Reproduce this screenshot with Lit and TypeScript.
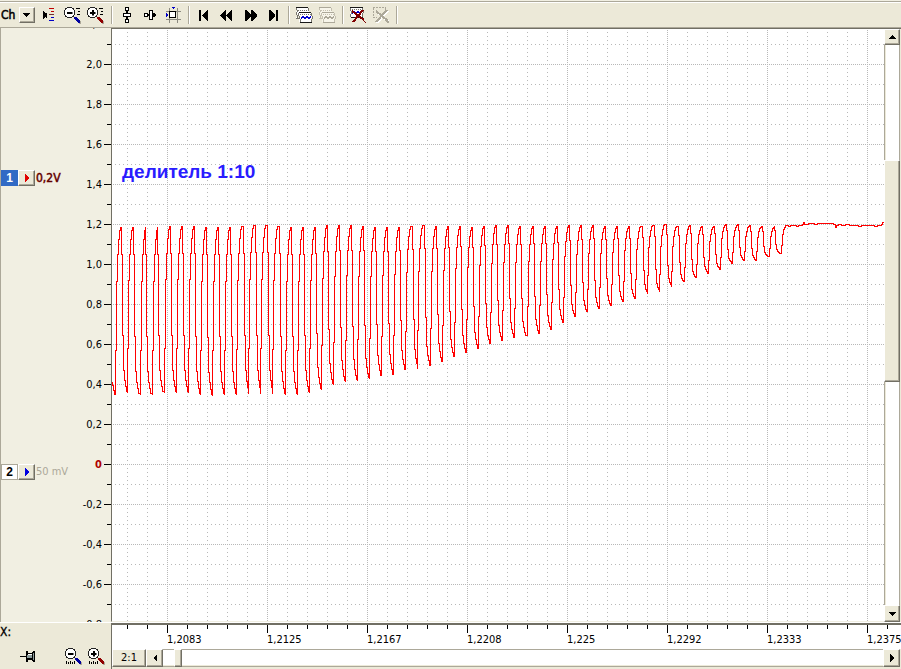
import { LitElement, html, css, svg } from "lit";
import { customElement, property } from "lit/decorators.js";

/* Crest and trough samples of the captured burst: [x, y] in screen units. */
const TROUGHS: number[][] = [
  [115, 395], [127, 393], [140, 395], [152, 395], [164, 393], [176, 393], [188, 393], [200, 395],
  [212, 396], [224, 395], [236, 395], [248, 394], [260, 394], [272, 394], [285, 395], [297, 395],
  [309, 393], [321, 390], [333, 385], [345, 382], [357, 381], [369, 379], [381, 376], [393, 375],
  [405, 370], [417, 369], [430, 366], [442, 362], [454, 357], [466, 353], [478, 349], [490, 344],
  [502, 341], [514, 338], [527, 336], [539, 334], [551, 330], [563, 323], [575, 317], [587, 312],
  [599, 309], [611, 306], [623, 302], [635, 299], [647, 294], [659, 292], [671, 287], [684, 282],
  [696, 278], [708, 273], [720, 269], [732, 263], [744, 260], [756, 260], [769, 256], [781, 253],
];
const CRESTS: number[][] = [
  [121, 227], [133, 227], [145, 227], [157, 227], [170, 226], [182, 226], [194, 226], [206, 227],
  [218, 227], [230, 227], [243, 226], [255, 225], [267, 225], [279, 226], [291, 227], [303, 227],
  [315, 227], [327, 225], [339, 225], [351, 225], [363, 226], [375, 227], [387, 227], [399, 227],
  [412, 226], [424, 225], [436, 226], [448, 226], [460, 226], [472, 227], [484, 226], [496, 225],
  [508, 225], [520, 226], [533, 226], [545, 226], [557, 226], [569, 225], [581, 225], [593, 225],
  [605, 226], [617, 226], [629, 226], [642, 226], [654, 225], [666, 224], [678, 226], [690, 225],
  [702, 226], [714, 226], [726, 224], [738, 224], [750, 225], [762, 226], [774, 226], [785, 225],
];
const RISE = [0.27, 0.68, 0.84, 0.93, 0.98, 1];
const FALL = [0.16, 0.65, 0.86, 0.92, 0.96, 0.99];
const TAIL: number[][] = [
  [788, 226], [790, 225], [796, 226], [798, 225], [802, 224], [803, 222], [804, 224], [808, 223],
  [814, 224], [817, 223], [833, 224], [835, 227], [836, 225], [838, 224], [841, 225], [845, 224],
  [849, 225], [858, 226], [861, 225], [874, 226], [877, 225], [881, 224], [882, 222], [884, 223],
];

function tracePath(): string {
  let d = "M112.5 382V385H113.5V390H114.5V394H115.5";
  TROUGHS.forEach(([bx, by], i) => {
    const [cx, cy] = CRESTS[i];
    d += `V${by}`;
    RISE.forEach((f, k) => {
      const x = Math.min(bx + k, cx);
      d += `H${x + 0.5}V${Math.round(by + (cy - by) * f)}`;
    });
    d += `H${cx + 0.5}`;
    const next = TROUGHS[i + 1];
    if (!next) return;
    FALL.forEach((f, k) => {
      d += `H${Math.min(cx + k, next[0]) + 0.5}V${Math.round(cy + (next[1] - cy) * f)}`;
    });
    d += `H${next[0] + 0.5}`;
  });
  return d;
}
const tailPath = "M785 225.5" + TAIL.map(([x, y]) => `H${x}V${y + 0.5}`).join("");

const lens = (color: string, plus: boolean) => svg`
  <path d="M6 4h5v1h2v2h1v5h-1v2h-2v1H6v-1H4v-2H3V7h1V5h2z" fill="#222"/>
  <path d="M6 5h5v1h1v1h1v5h-1v1h-1v1H6v-1H5v-1H4V7h1V6h1z" fill="#fff"/>
  <path d="M6 9h5v1.500H6z${plus ? "M8 7h1.500v5H8z" : ""}" fill="#000" stroke="#000" stroke-width=".5"/>
  <path d="M14 15h2l4 4v2h-2l-4-4z" fill="#aca899"/>
  <path d="M13 14h2l4 4v2h-2l-4-4z" fill="${color}"/>`;
const sideTicks = svg`<path d="M15 5.500h4M17 8.500h2M16 11.500h3" stroke="#000"/>`;
const footTicks = svg`<path d="M4.500 17v3M6.500 18v2M8.500 17v3M10.500 18v2M12.500 17v3" stroke="#000"/>`;
const sheets = (ink: string, edge: string, wave: string, paper: string) => svg`
  <path d="M4 4h12v3h1v3H6v6H4v-2h1v-3H4V8h1V7H4z" fill="${paper}"/>
  <path d="M4 4.500h12" stroke="${ink}"/>
  <path d="M4.500 5v2M5.500 7v2M4.500 9v3M5.500 12v3M16.500 5v3M4 15.500h3" stroke="${edge}"/>
  <path d="M6 7.500h10" stroke="${edge}" stroke-dasharray="1 1"/>
  <path d="M7 9h12v3h1v3h-1v4H7v-3h1v-3H7z" fill="${paper}"/>
  <path d="M7 9.500h12M8 19.500h12" stroke="${ink}"/>
  <path d="M6.500 10v3M7.500 13v3M8.500 16v3M19.500 10v3M20.500 13v3M19.500 16v3" stroke="${edge}"/>
  <path d="M8 11.500h11" stroke="${edge}" stroke-dasharray="1 1"/>
  <path d="M9 16l2-3 2 3 2-3 2 3 2-3" stroke="${wave}" fill="none"/>`;

const ICONS: Record<string, unknown> = {
  align: svg`<path d="M5 8v8l3-3v2h1v-5H8v1z" fill="#000"/>
    <path d="M11 5.500h5M13 8.500h3" stroke="#c00000"/><path d="M11 11.500h5" stroke="#703030"/>
    <path d="M13 14.500h3M11 17.500h5" stroke="#0000c8"/>`,
  zoomOut: svg`${lens("#0000a0", false)}${sideTicks}`,
  zoomIn: svg`${lens("#900000", true)}${sideTicks}`,
  xZoomOut: svg`${lens("#0000a0", false)}${footTicks}`,
  xZoomIn: svg`${lens("#900000", true)}${footTicks}`,
  fitV: svg`<path d="M12 8v8" stroke="#000" stroke-width="2"/>
    <g fill="#fff" stroke="#000"><path d="M10.500 4.500h3v3h-3zM10.500 16.500h3v3h-3zM8.500 10.500h7v3h-7z"/></g>`,
  fitH: svg`<path d="M8 12h10" stroke="#000" stroke-width="2"/>
    <g fill="#fff" stroke="#000"><path d="M6.500 10.500h3v3h-3zM15.500 10.500h1v3h-1zM11.500 7.500h3v9h-3z"/></g>`,
  fitBoth: svg`<path d="M8.500 5v15M16.500 5v15M5 8.500h15M5 16.500h15" stroke="#8c8a80"/>
    <path d="M8 8h7v7H8z" fill="#000"/><path d="M9 9h5v5H9z" fill="#fff"/>
    <path d="M10 4h4l-2 2zM5 10v4l2-2z" fill="#0000c8"/>`,
  first: svg`<path d="M7 7h2v11H7zM16 7v11h-1L10 13v-1l5-5z" fill="#000"/>`,
  back: svg`<path d="M11 7v11h-1L5 13v-1l5-5zM17 7v11h-1L11 13v-1l5-5z" fill="#000"/>`,
  forward: svg`<path d="M7 7v11h1l5-5v-1L8 7zM13 7v11h1l5-5v-1L14 7z" fill="#000"/>`,
  last: svg`<path d="M8 7v11h1l5-5v-1L9 7zM15 7h2v11h-2z" fill="#000"/>`,
  waves: sheets("#181818", "#77756c", "#0000d0", "#fff"),
  wavesOff: sheets("#aca899", "#c4c0b0", "#aca899", "#f7f5ea"),
  remove: svg`<path d="M4 4h13v3h1v3h-1v4H5v-3H4z" fill="#fff"/>
    <path d="M4 4.500h13M5 14.500h12" stroke="#181818"/>
    <path d="M4.500 5v3M5.500 8v3M4.500 11v3M16.500 5v2M17.500 7v3M16.500 10v4" stroke="#77756c"/>
    <path d="M6 6.500h10" stroke="#77756c" stroke-dasharray="1 1"/>
    <path d="M6 11l2-3 2 3 2-3 2 3 2-3" stroke="#0000d0" fill="none"/>
    <path d="M6 8l12 9M17 7L7 19" stroke="#800000" stroke-width="2"/>
    <path d="M17 17l3 3" stroke="#800000"/>`,
  removeOff: svg`<path d="M4 4.500h13M4.500 5v10M4 14.500h4M16.500 5v3" stroke="#aca899" stroke-dasharray="2 1"/>
    <path d="M8 9l12 10M19 8L8 20" stroke="#fff" stroke-width="2"/>
    <path d="M7 8l12 10M18 7L7 19M17 17l3 3" stroke="#aca899" stroke-width="2"/>`,
  pin: svg`<path d="M4 12h6v1H4z" fill="#000"/><path d="M10 7h2v2h4V8h1V7h2v11h-2v-1h-1v-1h-4v2h-2z" fill="#000"/>
    <path d="M12 10h4v1h-4z" fill="#fff"/><path d="M11 11h5v3h-5zM17 9h1v7h-1z" fill="#8c9c9c"/>`,
};

@customElement("tool-icon")
class ToolIcon extends LitElement {
  @property() name = "";
  @property() label = "";
  @property({ type: Boolean }) off = false;
  static styles = css`
    :host { display: block; flex: none; }
    .tool { display: block; width: 23px; height: 23px; padding: 0; border: 0; background: none; }
    .glyph { display: block; width: 23px; height: 23px; }
  `;
  render() {
    return html`<button class="tool" type="button" aria-label=${this.label} ?disabled=${this.off}>
      <svg class="glyph" viewBox="0 0 23 23" shape-rendering="crispEdges">${ICONS[this.name]}</svg>
    </button>`;
  }
}

const arrow = (d: string, color = "#000") =>
  html`<svg width="8" height="8" viewBox="0 0 8 8" shape-rendering="crispEdges"><path d=${d} fill=${color} /></svg>`;
const UP = "M4 2l4 4H0z";
const DOWN = "M0 2h8L4 6z";
const LEFT = "M6 0v8L2 4z";
const RIGHT = "M2 0v8l4-4z";

const TOOLS: [string, string, boolean?][][] = [
  [["align", "Channel levels"], ["zoomOut", "Zoom out"], ["zoomIn", "Zoom in"]],
  [["fitV", "Fit vertically"], ["fitH", "Fit horizontally"], ["fitBoth", "Fit both"]],
  [["first", "First"], ["back", "Back"], ["forward", "Forward"], ["last", "Last"]],
  [["waves", "Copy waveforms"], ["wavesOff", "Paste waveforms", true]],
  [["remove", "Delete waveform"], ["removeOff", "Delete all", true]],
];
const Y_LABELS = ["2,2", "2,0", "1,8", "1,6", "1,4", "1,2", "1,0", "0,8", "0,6", "0,4", "0,2", "0", "-0,2", "-0,4", "-0,6", "-0,8"];
const X_LABELS = ["1,2083", "1,2125", "1,2167", "1,2208", "1,225", "1,2292", "1,2333", "1,2375"];

@customElement("app-root")
class AppRoot extends LitElement {
  static styles = css`
    :host {
      display: grid; grid-template-rows: 28px minmax(0, 1fr) 47px; height: 100vh; overflow: hidden;
      background: #ece9d8; color: #000;
      font: 11px/14px "DejaVu Sans Condensed", "DejaVu Sans", sans-serif;
    }
    .toolbar {
      display: flex; align-items: center; box-sizing: border-box; padding-left: 1px;
      border-top: 1px solid #f1efe2; border-bottom: 1px solid #aca899;
      box-shadow: inset 0 1px #aca899, inset 0 2px #fff;
    }
    .channel { display: grid; grid-template-columns: 18px 16px; width: 34px; height: 16px; margin: 2px 3px 0 0; }
    .pick {
      grid-area: 1 / 1 / 2 / 3; appearance: none; border: 0; padding: 0; margin: 0; background: none;
      font: inherit; font-size: 12px; color: #000; -webkit-text-stroke: 0.5px #000;
    }
    .bevel {
      display: flex; align-items: center; justify-content: center; box-sizing: border-box; padding: 0;
      background: #ece9d8; font: inherit; color: #000; border: 1px solid; border-color: #fff #716f64 #716f64 #fff;
      box-shadow: inset -1px -1px #aca899;
    }
    .drop { grid-area: 1 / 2; pointer-events: none; }
    .sep { flex: none; width: 1px; height: 18px; margin: 2px 3px 0 4px; background: #aca899; box-shadow: 1px 0 #fff; }
    .main { display: grid; grid-template-columns: 111px minmax(0, 1fr) 17px; min-height: 0; }
    .side {
      display: grid; grid-template-columns: minmax(0, 1fr) 45px; min-height: 0; overflow: hidden;
      background: #f1efe2; border-left: 1px solid #aca899;
    }
    .channels { display: flex; flex-direction: column; gap: 278px; padding-top: 142px; min-width: 0; }
    .row { display: flex; align-items: center; height: 16px; white-space: nowrap; }
    .num {
      flex: none; width: 17px; height: 16px; padding: 0; border: 0; box-sizing: border-box; background: #fff;
      font: bold 12px/16px "Liberation Sans", sans-serif; text-align: center;
    }
    .num.on { background: #316ac5; color: #fff; }
    .num.idle { border: 1px solid #aca899; line-height: 12px; }
    .go { flex: none; width: 17px; height: 16px; margin-right: 1px; }
    .scale { font-size: 12px; color: #300000; -webkit-text-stroke: 0.5px #800000; }
    .scale.idle { font-size: 11px; color: #aca899; -webkit-text-stroke: 0; }
    .yruler { margin-top: -24px; }
    .ylabel {
      height: 40px; line-height: 41px; padding-right: 9px; text-align: right;
      background: linear-gradient(#000, #000) right 20px / 7px 1px no-repeat,
        linear-gradient(#000, #000) right 0 / 4px 1px no-repeat;
      background-position: right 0 top 20px, right 0 top 0;
    }
    .zero { font-weight: bold; color: #b00000; }
    .plot {
      position: relative; overflow: hidden; background: #fff;
      border-left: 1px solid #716f64; border-top: 1px solid #716f64; border-bottom: 1px solid #f1efe2;
    }
    .chart { display: block; width: 100%; height: 100%; }
    .note {
      position: absolute; left: 10px; top: 132px; color: #2a1cff;
      font: bold 19px/22px "Liberation Sans", sans-serif; white-space: nowrap;
    }
    .vscroll { display: grid; grid-template-rows: 16px 115fr 222fr 223fr 17px; padding-right: 1px; border-top: 1px solid #716f64; min-height: 0; }
    .track { background: #fff; border: 1px solid #aca899; border-width: 0 1px; box-shadow: inset 1px 0 #ece9d8; }
    .footer { display: grid; grid-template-columns: 111px minmax(0, 1fr); border-top: 1px solid #fff; }
    .xside { display: flex; flex-direction: column; justify-content: space-between; box-sizing: border-box; padding: 2px 3px 2px 0; }
    .xname { font-size: 12px; -webkit-text-stroke: 0.3px #000; }
    .xtools { display: flex; padding-left: 16px; }
    .grow { flex: 1; }
    .xarea {
      display: grid; grid-template-rows: 24px 18px; min-width: 0; overflow: hidden;
      border-top: 2px solid #716f64; border-left: 1px solid #716f64;
    }
    .xruler {
      display: flex; min-width: 0; overflow: hidden; padding: 8px 0 0 55px;
      background: linear-gradient(90deg, #000 1px, transparent 1px) 55px 0 / 100px 8px repeat-x,
        linear-gradient(90deg, #000 1px, transparent 1px) 15px 0 / 20px 4px repeat-x, #fff;
    }
    .xlabel { flex: 0 0 100px; }
    .xlabel:last-child { flex: none; }
    .hscroll { display: grid; grid-template-columns: 34px 17px 11px 8px minmax(0, 1fr) 17px; padding-right: 1px; }
    .htrack { background: #fff; border: 1px solid #aca899; border-width: 1px 0; box-shadow: inset 0 -1px #ece9d8; }
  `;

  render() {
    return html`
      <header class="toolbar">
        <label class="channel">
          <select class="pick" aria-label="Channel"><option>Ch</option></select>
          <span class="bevel drop">${arrow("M0 2h7L3.500 6z")}</span>
        </label>
        ${TOOLS.map((group) => html`
          ${group.map(([name, label, off]) => html`<tool-icon name=${name} label=${label} ?off=${!!off}></tool-icon>`)}
          <span class="sep"></span>`)}
      </header>
      <main class="main">
        <section class="side">
          <div class="channels">
            <div class="row">
              <button class="num on" type="button">1</button>
              <button class="bevel go" type="button" aria-label="Channel 1 menu">${arrow(RIGHT, "#e00000")}</button>
              <span class="scale">0,2V</span>
            </div>
            <div class="row">
              <button class="num idle" type="button">2</button>
              <button class="bevel go" type="button" aria-label="Channel 2 menu">${arrow(RIGHT, "#0000e0")}</button>
              <span class="scale idle">50 mV</span>
            </div>
          </div>
          <div class="yruler">
            ${Y_LABELS.map((t) => html`<div class="ylabel ${t === "0" ? "zero" : ""}">${t}</div>`)}
          </div>
        </section>
        <section class="plot">
          <svg class="chart" shape-rendering="crispEdges">
            <defs>
              <pattern id="grid" x="55" y="35" width="100" height="40" patternUnits="userSpaceOnUse">
                <g stroke="#b8b8b8">
                  <path d="M0 .5H100M.5 0V40" stroke-dasharray="1 1" />
                  <path d="M0 20.5H100M20.5 0V40M40.5 0V40M60.5 0V40M80.5 0V40" stroke-dasharray="1 3" />
                </g>
              </pattern>
            </defs>
            <rect width="100%" height="100%" fill="url(#grid)" />
            <g transform="translate(-112 -29)" fill="none" stroke="#f00">
              <path d=${tracePath()} />
              <path d=${tailPath} />
            </g>
          </svg>
          <div class="note">делитель 1:10</div>
        </section>
        <div class="vscroll">
          <button class="bevel" type="button" aria-label="Scroll up">${arrow(UP)}</button>
          <div class="track"></div>
          <div class="bevel"></div>
          <div class="track"></div>
          <button class="bevel" type="button" aria-label="Scroll down">${arrow(DOWN)}</button>
        </div>
      </main>
      <footer class="footer">
        <div class="xside">
          <span class="xname">X:</span>
          <div class="xtools">
            <tool-icon name="pin" label="Pin"></tool-icon>
            <span class="grow"></span>
            <tool-icon name="xZoomOut" label="Zoom out in time"></tool-icon>
            <tool-icon name="xZoomIn" label="Zoom in in time"></tool-icon>
          </div>
        </div>
        <div class="xarea">
          <div class="xruler">${X_LABELS.map((t) => html`<span class="xlabel">${t}</span>`)}</div>
          <div class="hscroll">
            <button class="bevel" type="button">2:1</button>
            <button class="bevel" type="button" aria-label="Scroll left">${arrow(LEFT)}</button>
            <div class="htrack"></div>
            <div class="bevel"></div>
            <div class="htrack"></div>
            <button class="bevel" type="button" aria-label="Scroll right">${arrow(RIGHT)}</button>
          </div>
        </div>
      </footer>
    `;
  }
}
